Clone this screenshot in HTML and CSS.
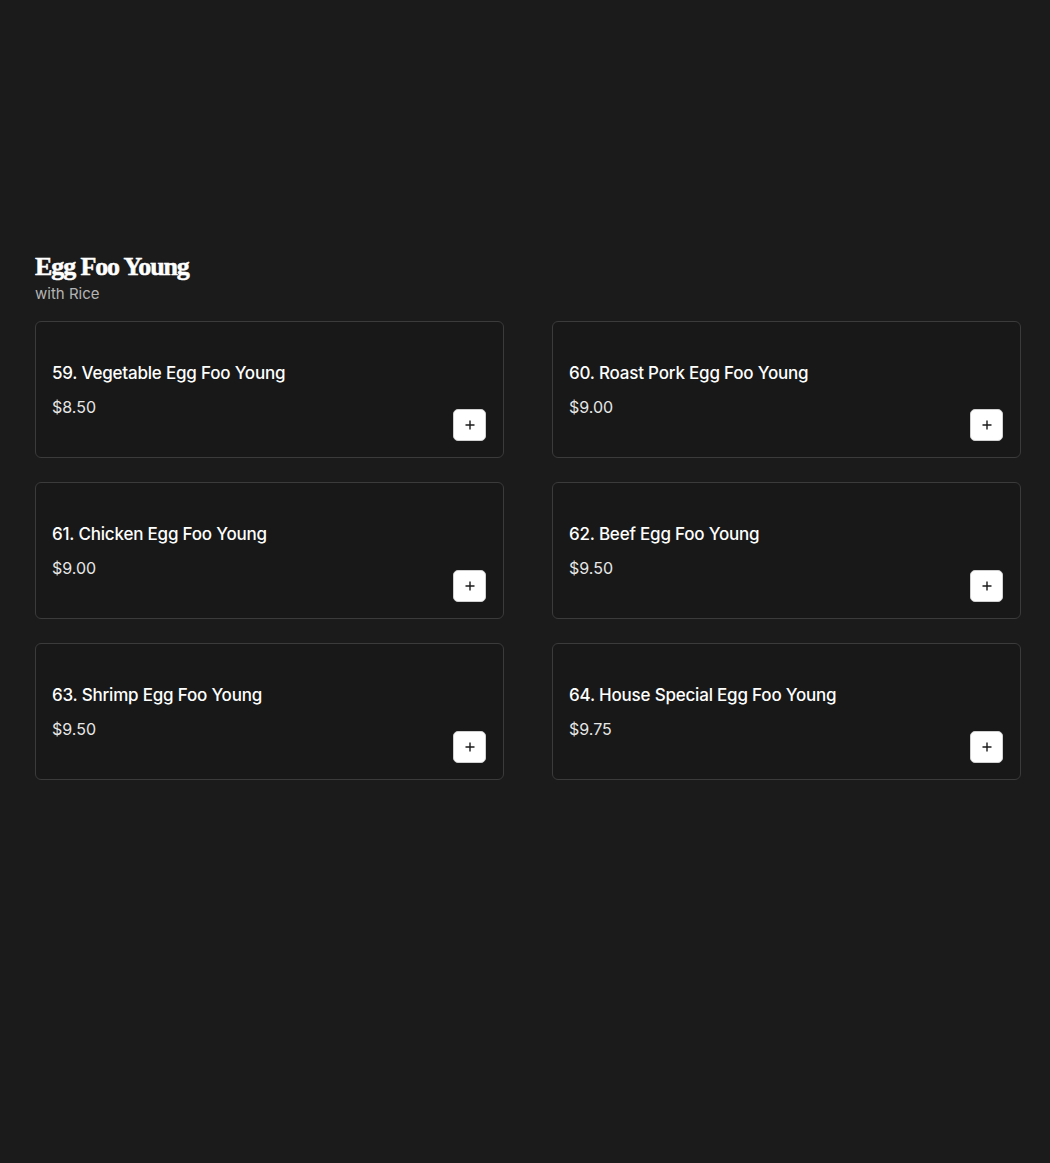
FILE: index.html
```html
<!DOCTYPE html>
<html lang="en">
<head>
<meta charset="utf-8">
<title>Egg Foo Young</title>
<link rel="stylesheet" href="styles.css">
</head>
<body>
<main class="page">
  <section class="category">
    <header class="category-head">
      <h2 class="category-title">Egg Foo Young</h2>
      <p class="category-sub">with Rice</p>
    </header>
    <div class="grid">
      <article class="card">
        <div class="info">
          <h3 class="name">59. Vegetable Egg Foo Young</h3>
          <p class="price">$8.50</p>
        </div>
        <button class="add" aria-label="Add"><svg viewBox="0 0 12 12" width="12" height="12"><path d="M6 1.5v9M1.5 6h9" stroke="#1b1b1b" stroke-width="1.4" fill="none"/></svg></button>
      </article>
      <article class="card">
        <div class="info">
          <h3 class="name">60. Roast Pork Egg Foo Young</h3>
          <p class="price">$9.00</p>
        </div>
        <button class="add" aria-label="Add"><svg viewBox="0 0 12 12" width="12" height="12"><path d="M6 1.5v9M1.5 6h9" stroke="#1b1b1b" stroke-width="1.4" fill="none"/></svg></button>
      </article>
      <article class="card">
        <div class="info">
          <h3 class="name">61. Chicken Egg Foo Young</h3>
          <p class="price">$9.00</p>
        </div>
        <button class="add" aria-label="Add"><svg viewBox="0 0 12 12" width="12" height="12"><path d="M6 1.5v9M1.5 6h9" stroke="#1b1b1b" stroke-width="1.4" fill="none"/></svg></button>
      </article>
      <article class="card">
        <div class="info">
          <h3 class="name">62. Beef Egg Foo Young</h3>
          <p class="price">$9.50</p>
        </div>
        <button class="add" aria-label="Add"><svg viewBox="0 0 12 12" width="12" height="12"><path d="M6 1.5v9M1.5 6h9" stroke="#1b1b1b" stroke-width="1.4" fill="none"/></svg></button>
      </article>
      <article class="card">
        <div class="info">
          <h3 class="name">63. Shrimp Egg Foo Young</h3>
          <p class="price">$9.50</p>
        </div>
        <button class="add" aria-label="Add"><svg viewBox="0 0 12 12" width="12" height="12"><path d="M6 1.5v9M1.5 6h9" stroke="#1b1b1b" stroke-width="1.4" fill="none"/></svg></button>
      </article>
      <article class="card">
        <div class="info">
          <h3 class="name">64. House Special Egg Foo Young</h3>
          <p class="price">$9.75</p>
        </div>
        <button class="add" aria-label="Add"><svg viewBox="0 0 12 12" width="12" height="12"><path d="M6 1.5v9M1.5 6h9" stroke="#1b1b1b" stroke-width="1.4" fill="none"/></svg></button>
      </article>
    </div>
  </section>
</main>
</body>
</html>
```
FILE: styles.css
```css
* { box-sizing: border-box; }
html, body {
  margin: 0;
  background: #1b1b1b;
  height: 100%;
}
body {
  font-family: Inter, "Noto Sans", sans-serif;
  color: #ffffff;
}
.page {
  padding: 252px 29px 0 35px;
}
.category-head {
  margin-bottom: 17px;
}
.category-title {
  margin: 0;
  font-family: "Liberation Serif", "DejaVu Serif", serif;
  font-weight: 700;
  font-size: 26px;
  line-height: 30px;
  letter-spacing: -1.1px;
  color: #ffffff;
  -webkit-text-stroke: 0.5px #ffffff;
}
.category-sub {
  margin: 2px 0 0;
  font-size: 15px;
  line-height: 20px;
  color: #b4b4b4;
}
.grid {
  display: grid;
  grid-template-columns: 1fr 1fr;
  column-gap: 48px;
  row-gap: 24px;
}
.card {
  display: flex;
  align-items: flex-end;
  justify-content: space-between;
  height: 137px;
  padding: 16px 17px 16px 16px;
  border: 1px solid #3b3b3b;
  border-radius: 6px;
  background: #181818;
}
.info {
  align-self: flex-start;
  padding-top: 22px;
}
.name {
  margin: 0;
  font-size: 17px;
  line-height: 26px;
  font-weight: 500;
  letter-spacing: -0.2px;
  color: #ffffff;
}
.price {
  margin: 11px 0 0;
  font-size: 16px;
  line-height: 20px;
  color: #e6e6e6;
}
.add {
  flex: none;
  display: flex;
  align-items: center;
  justify-content: center;
  width: 33px;
  height: 32px;
  padding: 0;
  border: 1px solid #d0d0d0;
  border-radius: 5px;
  background: #ffffff;
  cursor: pointer;
}
```
